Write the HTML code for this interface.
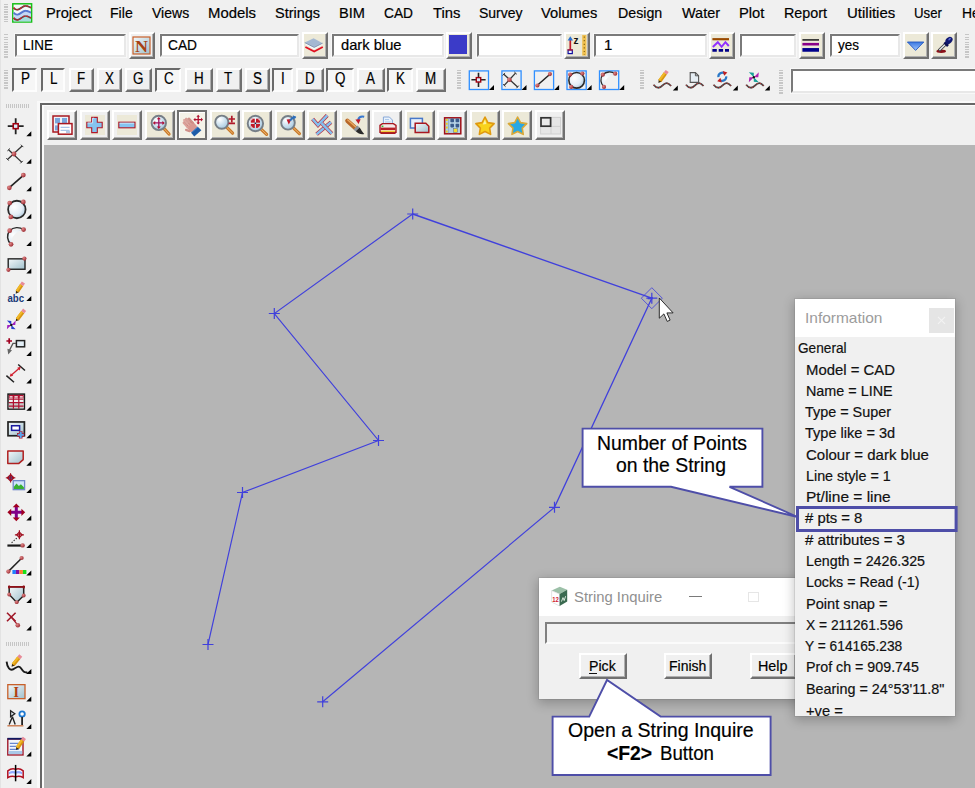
<!DOCTYPE html>
<html><head><meta charset="utf-8"><title>12d Model - String Inquire</title>
<style>
html,body{margin:0;padding:0;}
body{width:975px;height:788px;overflow:hidden;background:#f0f0f0;position:relative;font-family:"Liberation Sans",sans-serif;}
.t{-webkit-text-stroke:0.2px currentColor;position:absolute;white-space:pre;line-height:1;transform-origin:0 0;display:block;}
.fld{position:absolute;background:#fff;box-sizing:border-box;border:2px solid;border-color:#7a7a7a #e8e8e8 #e8e8e8 #7a7a7a;box-shadow:0 0 0 1px #f8f8f8;}
.btn{position:absolute;box-sizing:border-box;background:#ece9d8;border:2px solid;border-color:#fff #707070 #707070 #fff;}
.btn::after{content:"";position:absolute;left:0;top:0;right:0;bottom:0;border-right:1px solid #b0b0b0;border-bottom:1px solid #b0b0b0;}
.btn.g{background:#f0f0f0;}
.btn.p{border-color:#6a6a6a #fdfdfd #fdfdfd #6a6a6a;background:#f6f6f6;}
.btn.p::after,.btn.h::after{border:0;}
.btn.h{border-color:#707070;background:#f4f2e8;box-shadow:inset 1px 1px 0 #fff;}
svg{position:absolute;overflow:visible;}
</style></head><body>
<div style="position:absolute;left:0px;top:0px;width:1px;height:788px;background:#e3e3e3;"></div>
<div style="position:absolute;left:3.5px;top:4.2px;width:4.2px;height:17.5px;background:repeating-linear-gradient(to bottom,#c6c6c6 0 1.2px,transparent 1.2px 2.5px);"></div>
<span class="t" style="left:45.50px;top:5.00px;font-size:15px;color:#000;transform:scaleX(0.9753);">Project</span>
<span class="t" style="left:110.00px;top:5.00px;font-size:15px;color:#000;transform:scaleX(0.9400);">File</span>
<span class="t" style="left:151.80px;top:5.00px;font-size:15px;color:#000;transform:scaleX(0.9358);">Views</span>
<span class="t" style="left:208.00px;top:5.00px;font-size:15px;color:#000;transform:scaleX(0.9922);">Models</span>
<span class="t" style="left:275.00px;top:5.00px;font-size:15px;color:#000;transform:scaleX(0.9646);">Strings</span>
<span class="t" style="left:339.00px;top:5.00px;font-size:15px;color:#000;transform:scaleX(0.9738);">BIM</span>
<span class="t" style="left:384.00px;top:5.00px;font-size:15px;color:#000;transform:scaleX(0.9163);">CAD</span>
<span class="t" style="left:432.60px;top:5.00px;font-size:15px;color:#000;transform:scaleX(0.9874);">Tins</span>
<span class="t" style="left:478.50px;top:5.00px;font-size:15px;color:#000;transform:scaleX(0.9325);">Survey</span>
<span class="t" style="left:541.30px;top:5.00px;font-size:15px;color:#000;transform:scaleX(0.9787);">Volumes</span>
<span class="t" style="left:617.70px;top:5.00px;font-size:15px;color:#000;transform:scaleX(0.9481);">Design</span>
<span class="t" style="left:682.00px;top:5.00px;font-size:15px;color:#000;transform:scaleX(0.9632);">Water</span>
<span class="t" style="left:739.00px;top:5.00px;font-size:15px;color:#000;transform:scaleX(0.9816);">Plot</span>
<span class="t" style="left:784.00px;top:5.00px;font-size:15px;color:#000;transform:scaleX(0.9556);">Report</span>
<span class="t" style="left:846.70px;top:5.00px;font-size:15px;color:#000;transform:scaleX(0.9984);">Utilities</span>
<span class="t" style="left:914.30px;top:5.00px;font-size:15px;color:#000;transform:scaleX(0.8815);">User</span>
<span class="t" style="left:961.50px;top:5.00px;font-size:15px;color:#000;transform:scaleX(0.9246);">Help</span>
<div style="position:absolute;left:3.5px;top:34px;width:4.2px;height:25.0px;background:repeating-linear-gradient(to bottom,#c6c6c6 0 1.2px,transparent 1.2px 2.5px);"></div>
<div class="fld" style="left:15px;top:33.5px;width:111px;height:23.0px"></div>
<span class="t" style="left:22.80px;top:37.40px;font-size:15px;color:#000;transform:scaleX(0.8959);">LINE</span>
<div class="btn g" style="left:129px;top:32px;width:26px;height:27px"></div>
<div class="fld" style="left:160px;top:33.5px;width:139px;height:23.0px"></div>
<span class="t" style="left:167.80px;top:37.40px;font-size:15px;color:#000;transform:scaleX(0.9163);">CAD</span>
<div class="btn " style="left:302px;top:32px;width:26px;height:27px"></div>
<div class="fld" style="left:332px;top:33.5px;width:112px;height:23.0px"></div>
<span class="t" style="left:340.50px;top:37.40px;font-size:15px;color:#000;transform:scaleX(0.9802);">dark blue</span>
<div class="btn " style="left:446px;top:32px;width:26px;height:27px"><div style="position:absolute;left:0.8px;top:1.3px;width:18.6px;height:18.8px;background:#3b3bc8"></div></div>
<div class="fld" style="left:477px;top:33.5px;width:85px;height:23.0px"></div>
<div class="btn " style="left:564px;top:32px;width:26px;height:27px"></div>
<div class="fld" style="left:594px;top:33.5px;width:113px;height:23.0px"></div>
<span class="t" style="left:603.90px;top:37.40px;font-size:15px;color:#000;transform:scaleX(1.0000);">1</span>
<div class="btn " style="left:709px;top:32px;width:26px;height:27px"></div>
<div class="fld" style="left:740px;top:33.5px;width:56px;height:23.0px"></div>
<div class="btn " style="left:799px;top:32px;width:26px;height:27px"></div>
<div class="fld" style="left:830px;top:33.5px;width:70px;height:23.0px"></div>
<span class="t" style="left:838.00px;top:37.40px;font-size:15px;color:#000;transform:scaleX(0.9003);">yes</span>
<div class="btn " style="left:903px;top:32px;width:26px;height:27px"></div>
<div class="btn " style="left:931px;top:32px;width:26px;height:27px"></div>
<div style="position:absolute;left:965px;top:34px;width:4.2px;height:25.0px;background:repeating-linear-gradient(to bottom,#c6c6c6 0 1.2px,transparent 1.2px 2.5px);"></div>
<div style="position:absolute;left:3.5px;top:70px;width:4.2px;height:20.0px;background:repeating-linear-gradient(to bottom,#c6c6c6 0 1.2px,transparent 1.2px 2.5px);"></div>
<div class="btn g p" style="left:12px;top:68px;width:25px;height:23.5px"></div>
<span class="t" style="left:20.54px;top:71.09px;font-size:15.6px;color:#000;transform:scaleX(0.8600);">P</span>
<div class="btn g p" style="left:41px;top:68px;width:24px;height:23.5px"></div>
<span class="t" style="left:49.78px;top:71.09px;font-size:15.6px;color:#000;transform:scaleX(0.8600);">L</span>
<div class="btn g" style="left:69px;top:68px;width:25px;height:23.5px"></div>
<span class="t" style="left:76.91px;top:71.09px;font-size:15.6px;color:#000;transform:scaleX(0.8600);">F</span>
<div class="btn g" style="left:97px;top:68px;width:25px;height:23.5px"></div>
<span class="t" style="left:104.54px;top:71.09px;font-size:15.6px;color:#000;transform:scaleX(0.8600);">X</span>
<div class="btn g" style="left:125px;top:68px;width:27px;height:23.5px"></div>
<span class="t" style="left:132.77px;top:71.09px;font-size:15.6px;color:#000;transform:scaleX(0.8600);">G</span>
<div class="btn g p" style="left:155px;top:68px;width:26px;height:23.5px"></div>
<span class="t" style="left:163.67px;top:71.09px;font-size:15.6px;color:#000;transform:scaleX(0.8600);">C</span>
<div class="btn g" style="left:185px;top:68px;width:28px;height:23.5px"></div>
<span class="t" style="left:193.67px;top:71.09px;font-size:15.6px;color:#000;transform:scaleX(0.8600);">H</span>
<div class="btn g" style="left:216px;top:68px;width:26px;height:23.5px"></div>
<span class="t" style="left:224.41px;top:71.09px;font-size:15.6px;color:#000;transform:scaleX(0.8600);">T</span>
<div class="btn g" style="left:245px;top:68px;width:25px;height:23.5px"></div>
<span class="t" style="left:252.54px;top:71.09px;font-size:15.6px;color:#000;transform:scaleX(0.8600);">S</span>
<div class="btn g p" style="left:272px;top:68px;width:21px;height:23.5px"></div>
<span class="t" style="left:281.12px;top:71.09px;font-size:15.6px;color:#000;transform:scaleX(0.8600);">I</span>
<div class="btn g" style="left:296px;top:68px;width:28px;height:23.5px"></div>
<span class="t" style="left:304.67px;top:71.09px;font-size:15.6px;color:#000;transform:scaleX(0.8600);">D</span>
<div class="btn g p" style="left:326px;top:68px;width:28px;height:23.5px"></div>
<span class="t" style="left:335.27px;top:71.09px;font-size:15.6px;color:#000;transform:scaleX(0.8600);">Q</span>
<div class="btn g" style="left:357px;top:68px;width:28px;height:23.5px"></div>
<span class="t" style="left:366.01px;top:71.09px;font-size:15.6px;color:#000;transform:scaleX(0.8600);">A</span>
<div class="btn g p" style="left:387px;top:68px;width:26px;height:23.5px"></div>
<span class="t" style="left:396.04px;top:71.09px;font-size:15.6px;color:#000;transform:scaleX(0.8600);">K</span>
<div class="btn g" style="left:416px;top:68px;width:30px;height:23.5px"></div>
<span class="t" style="left:424.90px;top:71.09px;font-size:15.6px;color:#000;transform:scaleX(0.8600);">M</span>
<div style="position:absolute;left:456.5px;top:70px;width:4.2px;height:20.0px;background:repeating-linear-gradient(to bottom,#c6c6c6 0 1.2px,transparent 1.2px 2.5px);"></div>
<div style="position:absolute;left:640px;top:70px;width:4.2px;height:20.0px;background:repeating-linear-gradient(to bottom,#c6c6c6 0 1.2px,transparent 1.2px 2.5px);"></div>
<div style="position:absolute;left:778.5px;top:70px;width:4.2px;height:25.0px;background:repeating-linear-gradient(to bottom,#c6c6c6 0 1.2px,transparent 1.2px 2.5px);"></div>
<div class="fld" style="left:791px;top:69px;width:189px;height:24px"></div>
<div style="position:absolute;left:6px;top:104px;width:24px;height:4.2px;background:repeating-linear-gradient(to right,#c6c6c6 0 1px,transparent 1px 2px);"></div>
<div style="position:absolute;left:6px;top:641.6px;width:24px;height:4.2px;background:repeating-linear-gradient(to right,#c6c6c6 0 1px,transparent 1px 2px);"></div>
<div style="position:absolute;left:37px;top:101px;width:940px;height:700px;background:#f0f0f0;border-left:3px solid #f9f9f9;border-top:2px solid #fafafa;"></div>
<div style="position:absolute;left:40px;top:103px;width:940px;height:700px;background:#f0f0f0;border-left:2px solid #676767;border-top:2px solid #676767;"></div>
<div style="position:absolute;left:42px;top:105px;width:940px;height:1px;background:#fdfdfd;"></div>
<div style="position:absolute;left:42px;top:106px;width:2.3px;height:690px;background:#fbfbfb;"></div>
<div style="position:absolute;left:44.3px;top:145px;width:940px;height:650px;background:#b5b5b5;"></div>
<div class="btn g" style="left:47px;top:110px;width:30px;height:30px"></div>
<div class="btn g" style="left:80px;top:110px;width:30px;height:30px"><div style="position:absolute;left:2.6px;top:3.2px;width:20.4px;height:19.6px;background:#ece9d8"></div></div>
<div class="btn g" style="left:112px;top:110px;width:30px;height:30px"><div style="position:absolute;left:2.6px;top:3.2px;width:20.4px;height:19.6px;background:#ece9d8"></div></div>
<div class="btn " style="left:145px;top:110px;width:30px;height:30px"></div>
<div class="btn h" style="left:177px;top:110px;width:30px;height:30px"></div>
<div class="btn " style="left:210px;top:110px;width:30px;height:30px"></div>
<div class="btn " style="left:242px;top:110px;width:30px;height:30px"></div>
<div class="btn " style="left:275px;top:110px;width:30px;height:30px"></div>
<div class="btn " style="left:307px;top:110px;width:30px;height:30px"></div>
<div class="btn " style="left:340px;top:110px;width:30px;height:30px"></div>
<div class="btn g" style="left:372px;top:110px;width:30px;height:30px"></div>
<div class="btn " style="left:405px;top:110px;width:30px;height:30px"></div>
<div class="btn g" style="left:437px;top:110px;width:30px;height:30px"></div>
<div class="btn " style="left:470px;top:110px;width:30px;height:30px"></div>
<div class="btn " style="left:502px;top:110px;width:30px;height:30px"></div>
<div class="btn g" style="left:535px;top:110px;width:30px;height:30px"></div>
<svg width="975" height="788" style="left:0;top:0"><defs>
<radialGradient id="gball" cx="35%" cy="35%" r="75%"><stop offset="0" stop-color="#fff"/><stop offset="0.6" stop-color="#e4eef6"/><stop offset="1" stop-color="#a9c4d8"/></radialGradient>
<linearGradient id="gpane" x1="0" y1="0" x2="1" y2="1"><stop offset="0" stop-color="#f4f8fa"/><stop offset="1" stop-color="#9fc0cc"/></linearGradient>
<linearGradient id="gtri" x1="0" y1="0" x2="0" y2="1"><stop offset="0" stop-color="#3b78e0"/><stop offset="1" stop-color="#9cc4ff"/></linearGradient>
<radialGradient id="gdot" cx="35%" cy="35%" r="70%"><stop offset="0" stop-color="#e08888"/><stop offset="1" stop-color="#9a2830"/></radialGradient>
<radialGradient id="glens" cx="35%" cy="30%" r="80%"><stop offset="0" stop-color="#ffffff"/><stop offset="1" stop-color="#9cc4de"/></radialGradient>
</defs><rect x="469.3" y="70.9" width="19.2" height="18.6" fill="none" stroke="#2f8fff" stroke-width="1.3"/><path d="M471.4 79.8H485.6M478.5 72.7V86.9" stroke="#222" stroke-width="1.6"/><rect x="476.3" y="77.6" width="4.4" height="4.4" fill="#d8ecfa" stroke="#a00010" stroke-width="1.4"/><path d="M494.0 85.1L494.0 90.1L489.0 90.1Z" fill="#000"/><rect x="501.9" y="70.9" width="19.2" height="18.6" fill="none" stroke="#2f8fff" stroke-width="1.3"/><path d="M503.8 74.2L517.6 86.9" stroke="#333" stroke-width="1.3"/><path d="M504.9 72.9L502.6 75.5" stroke="#333" stroke-width="1"/><path d="M518.8 85.6L516.5 88.2" stroke="#333" stroke-width="1"/><path d="M515.5 73.1L504.2 85.4" stroke="#333" stroke-width="1.3"/><path d="M516.8 74.3L514.3 71.9" stroke="#333" stroke-width="1"/><path d="M505.5 86.6L503.0 84.2" stroke="#333" stroke-width="1"/><circle cx="509.4" cy="79.8" r="2.3" fill="url(#gdot)"/><path d="M526.5 85.1L526.5 90.1L521.5 90.1Z" fill="#000"/><rect x="534.4" y="70.9" width="19.2" height="18.6" fill="none" stroke="#2f8fff" stroke-width="1.3"/><path d="M537.3999999999999 85.3L549.8999999999999 74.3" stroke="#222" stroke-width="1.5"/><circle cx="537.4" cy="85.5" r="2.1" fill="url(#gdot)"/><circle cx="549.9" cy="74.1" r="2.1" fill="url(#gdot)"/><path d="M559.1 85.1L559.1 90.1L554.1 90.1Z" fill="#000"/><rect x="567.0" y="70.9" width="19.2" height="18.6" fill="none" stroke="#2f8fff" stroke-width="1.3"/><circle cx="576.65" cy="80.3" r="7.8" fill="url(#gball)" stroke="#2a2a2a" stroke-width="1.6"/><circle cx="570.2" cy="74.5" r="2.1" fill="url(#gdot)"/><circle cx="582.4" cy="73.5" r="2.1" fill="url(#gdot)"/><circle cx="571.2" cy="86.9" r="2.1" fill="url(#gdot)"/><path d="M591.6 85.1L591.6 90.1L586.6 90.1Z" fill="#000"/><rect x="599.5" y="70.9" width="19.2" height="18.6" fill="none" stroke="#2f8fff" stroke-width="1.3"/><path d="M603.9999999999999 86.69999999999999A9 9 0 0 1 602.8 74.7L615.1999999999999 73.89999999999999A13 13 0 0 0 603.9999999999999 86.69999999999999Z" fill="url(#gball)"/><path d="M603.9999999999999 86.69999999999999A8.6 8.6 0 0 1 602.8 74.7A9.5 9.5 0 0 1 615.1999999999999 73.89999999999999" fill="none" stroke="#2a2a2a" stroke-width="1.3"/><circle cx="602.8" cy="74.7" r="2.1" fill="url(#gdot)"/><circle cx="615.2" cy="73.7" r="2.1" fill="url(#gdot)"/><circle cx="604.0" cy="86.9" r="2.1" fill="url(#gdot)"/><path d="M624.2 85.1L624.2 90.1L619.2 90.1Z" fill="#000"/><path d="M653.6 84.80000000000001C656.6 88.60000000000001,659.6 88.60000000000001,662.6 85.4S668.1 82.4,671.1 86.0" fill="none" stroke="#444" stroke-width="1.8"/><path d="M653.6 84.80000000000001C656.6 88.60000000000001,659.6 88.60000000000001,662.6 85.4S668.1 82.4,671.1 86.0" fill="none" stroke="#d83030" stroke-width="0.8" stroke-dasharray="1.4 1.8"/><path d="M658.40 83.00L661.82 81.54L658.76 79.30Z" fill="#3a2a10"/><path d="M661.47 82.03L666.96 74.54L663.89 72.30L658.41 79.78Z" fill="#d89410"/><path d="M660.10 81.02L665.59 73.54L663.89 72.30L658.41 79.78Z" fill="#f0b828"/><path d="M666.96 74.54L668.73 72.12L665.67 69.88L663.89 72.30Z" fill="#e88a98"/><path d="M677.8 85.4L677.8 90.4L672.8 90.4Z" fill="#000"/><path d="M686 84.80000000000001C689 88.60000000000001,692 88.60000000000001,695 85.4S700.5 82.4,703.5 86.0" fill="none" stroke="#444" stroke-width="1.8"/><path d="M686 84.80000000000001C689 88.60000000000001,692 88.60000000000001,695 85.4S700.5 82.4,703.5 86.0" fill="none" stroke="#d83030" stroke-width="0.8" stroke-dasharray="1.4 1.8"/><path d="M690.2 72.6h5.2l3.2 3.2v6.6h-8.4z" fill="#e6eef4" stroke="#555" stroke-width="1.1"/><path d="M695.4 72.6v3.2h3.2" fill="none" stroke="#555" stroke-width="1"/><path d="M713.6 84.80000000000001C716.6 88.60000000000001,719.6 88.60000000000001,722.6 85.4S728.1 82.4,731.1 86.0" fill="none" stroke="#444" stroke-width="1.8"/><path d="M713.6 84.80000000000001C716.6 88.60000000000001,719.6 88.60000000000001,722.6 85.4S728.1 82.4,731.1 86.0" fill="none" stroke="#d83030" stroke-width="0.8" stroke-dasharray="1.4 1.8"/><path d="M737.8 85.4L737.8 90.4L732.8 90.4Z" fill="#000"/><path d="M718.4 77.2A4 4 0 0 1 724.6 73.4" fill="none" stroke="#2a78c8" stroke-width="2.2"/><path d="M722.8 71l4.6 1.4l-3.2 3.4z" fill="#c02020"/><path d="M726.2 76.4A4 4 0 0 1 720 80.2" fill="none" stroke="#2a78c8" stroke-width="2.2"/><path d="M721.8 82.6l-4.6 -1.4l3.2 -3.4z" fill="#c02020"/><path d="M746.2 84.80000000000001C749.2 88.60000000000001,752.2 88.60000000000001,755.2 85.4S760.7 82.4,763.7 86.0" fill="none" stroke="#444" stroke-width="1.8"/><path d="M746.2 84.80000000000001C749.2 88.60000000000001,752.2 88.60000000000001,755.2 85.4S760.7 82.4,763.7 86.0" fill="none" stroke="#d83030" stroke-width="0.8" stroke-dasharray="1.4 1.8"/><path d="M769.8 85.4L769.8 90.4L764.8 90.4Z" fill="#000"/><path d="M753.8 77.2L748.8 72.2L753.8 72.7ZM753.8 77.2L758.8 82.2L753.8 81.7Z" fill="#18a098"/><path d="M753.8 77.2L758.8 72.2L758.3 77.2ZM753.8 77.2L748.8 82.2L749.3 77.2Z" fill="#b020b0"/><circle cx="753.8" cy="77.2" r="1.2" fill="#111"/><rect x="12.8" y="3.8" width="18.8" height="18.2" fill="#f4f8f8" stroke="#18c018" stroke-width="1.5"/><path d="M13.6 17.9C15.2 19.9,16.4 20.099999999999998,17.6 19.9C20.6 19.5,22.6 15.899999999999999,25.6 15.999999999999998C27.4 15.999999999999998,29.4 17.299999999999997,31 17.9V21.4H13.6Z" fill="#a4dcdc"/><path d="M13.6 12.6C15.2 14.6,16.4 14.8,17.6 14.6C20.6 14.2,22.6 10.6,25.6 10.7C27.4 10.7,29.4 12.0,31 12.6V17.9C29.4 17.3,27.4 16,25.6 16C22.6 15.9,20.6 19.5,17.6 19.9C16.4 20.1,15.2 19.9,13.6 17.9Z" fill="#c4d8f4"/><path d="M13.6 12.6C15.2 14.6,16.4 14.8,17.6 14.6C20.6 14.2,22.6 10.6,25.6 10.7C27.4 10.7,29.4 12.0,31 12.6" fill="none" stroke="#5878d0" stroke-width="1.9"/><path d="M13.6 7.7C15.2 9.7,16.4 9.9,17.6 9.7C20.6 9.3,22.6 5.7,25.6 5.800000000000001C27.4 5.800000000000001,29.4 7.1000000000000005,31 7.7" fill="none" stroke="#5a4848" stroke-width="1.7"/><path d="M13.6 7.7C15.2 9.7,16.4 9.9,17.6 9.7C20.6 9.3,22.6 5.7,25.6 5.800000000000001C27.4 5.800000000000001,29.4 7.1000000000000005,31 7.7" fill="none" stroke="#d02028" stroke-width="1.2" stroke-dasharray="2 1.6"/><path d="M13.6 17.9C15.2 19.9,16.4 20.099999999999998,17.6 19.9C20.6 19.5,22.6 15.899999999999999,25.6 15.999999999999998C27.4 15.999999999999998,29.4 17.299999999999997,31 17.9" fill="none" stroke="#5a4848" stroke-width="1.7"/><path d="M13.6 17.9C15.2 19.9,16.4 20.099999999999998,17.6 19.9C20.6 19.5,22.6 15.899999999999999,25.6 15.999999999999998C27.4 15.999999999999998,29.4 17.299999999999997,31 17.9" fill="none" stroke="#d02028" stroke-width="1.2" stroke-dasharray="2 1.6"/><rect x="133" y="37" width="17" height="17" fill="url(#gpane)" stroke="#c8602a" stroke-width="1.2"/><text x="141.5" y="52" font-family="Liberation Serif" font-weight="bold" font-size="17" fill="#a84010" text-anchor="middle" textLength="13" lengthAdjust="spacingAndGlyphs">N</text><path d="M305.4 47L314.2 51.6L322.8 47" fill="none" stroke="#e01020" stroke-width="1.8"/><path d="M305.2 44.6L314.2 49.4L322.8 44.6L314.2 41z" fill="#f4f8fb"/><path d="M304.8 42.6L313.6 38.2L322.6 43.2L314.2 47.4z" fill="#a4b8d2"/><path d="M304.8 42.6L314.2 47.4L322.6 43.2" fill="none" stroke="#7f93ad" stroke-width="0.9"/><path d="M570.3 39.5V50" stroke="#c01828" stroke-width="1.7"/><path d="M570.3 36.2L573 40.6H567.6z" fill="#2a70d0"/><rect x="568.1" y="50" width="4.2" height="3.6" fill="#e8f0ff" stroke="#1010a0" stroke-width="1.2"/><path d="M567.5 49.9h5.4" stroke="#c01828" stroke-width="1.2"/><text x="573.4" y="44.2" font-family="Liberation Sans" font-weight="bold" font-size="10" fill="#111">z</text><rect x="582.2" y="35" width="4.2" height="20.6" fill="#f0c050"/><path d="M584.3 36.5V55" stroke="#8a6a10" stroke-width="1.2" stroke-dasharray="1.2 2.4"/><path d="M712.4 39.2H729" stroke="#9a4a00" stroke-width="2.2"/><path d="M712.8 47L717.8 42.2L721.6 46.8L725.4 42.2L728.8 46" fill="none" stroke="#9030ff" stroke-width="1.9"/><path d="M712.4 50.4H729" stroke="#000088" stroke-width="2.6" stroke-dasharray="4.4 1.9"/><path d="M802.4 39.9H819" stroke="#333" stroke-width="1.7"/><path d="M802.4 44.2H819" stroke="#880088" stroke-width="2.6"/><path d="M802.4 49.9H819" stroke="#00008b" stroke-width="3.7"/><path d="M907.4 42L923.8 42L915.6 50.4z" fill="url(#gtri)" stroke="#2458c0" stroke-width="0.9"/><ellipse cx="941.2" cy="51.3" rx="4.8" ry="1.7" fill="#8a1018"/><path d="M946.4 43.4L938.8 50.6" stroke="#444" stroke-width="3"/><path d="M946 43.8L939.4 50" stroke="#e8eef4" stroke-width="1.3"/><path d="M944.4 42.4l3.6 3.6" stroke="#0c1050" stroke-width="2.6"/><ellipse cx="949" cy="40.4" rx="3" ry="4" transform="rotate(45 949 40.4)" fill="#101870"/><ellipse cx="949.6" cy="39.2" rx="0.9" ry="1.6" transform="rotate(45 949.6 39.2)" fill="#5868d0"/><path d="M31.3 131.3L31.3 136.3L26.3 136.3Z" fill="#000"/><path d="M31.3 158.8L31.3 163.8L26.3 163.8Z" fill="#000"/><path d="M31.3 186.2L31.3 191.2L26.3 191.2Z" fill="#000"/><path d="M31.3 213.7L31.3 218.7L26.3 218.7Z" fill="#000"/><path d="M31.3 241.1L31.3 246.1L26.3 246.1Z" fill="#000"/><path d="M31.3 268.6L31.3 273.6L26.3 273.6Z" fill="#000"/><path d="M31.3 296.0L31.3 301.0L26.3 301.0Z" fill="#000"/><path d="M31.3 323.5L31.3 328.5L26.3 328.5Z" fill="#000"/><path d="M31.3 350.9L31.3 355.9L26.3 355.9Z" fill="#000"/><path d="M31.3 378.4L31.3 383.4L26.3 383.4Z" fill="#000"/><path d="M31.3 405.8L31.3 410.8L26.3 410.8Z" fill="#000"/><path d="M31.3 433.2L31.3 438.2L26.3 438.2Z" fill="#000"/><path d="M31.3 460.7L31.3 465.7L26.3 465.7Z" fill="#000"/><path d="M31.3 488.1L31.3 493.1L26.3 493.1Z" fill="#000"/><path d="M31.3 515.6L31.3 520.6L26.3 520.6Z" fill="#000"/><path d="M31.3 543.1L31.3 548.1L26.3 548.1Z" fill="#000"/><path d="M31.3 570.5L31.3 575.5L26.3 575.5Z" fill="#000"/><path d="M31.3 598.0L31.3 603.0L26.3 603.0Z" fill="#000"/><path d="M31.3 625.4L31.3 630.4L26.3 630.4Z" fill="#000"/><g transform="translate(5.05 115.55) scale(1.12)"><path d="M2.4 9.5H16.6M9.5 2.4V16.6" stroke="#222" stroke-width="1.6"/><rect x="7.3" y="7.3" width="4.4" height="4.4" fill="#d8ecfa" stroke="#a00010" stroke-width="1.4"/></g><path d="M8.6 149.7L21.6 162.1" stroke="#333" stroke-width="1.3"/><path d="M9.8 148.5L7.4 150.9" stroke="#333" stroke-width="1"/><path d="M22.8 160.9L20.4 163.3" stroke="#333" stroke-width="1"/><path d="M22.1 145.9L7.5 159.4" stroke="#333" stroke-width="1.3"/><path d="M23.3 147.1L20.9 144.7" stroke="#333" stroke-width="1"/><path d="M8.7 160.6L6.3 158.2" stroke="#333" stroke-width="1"/><circle cx="14.0" cy="154.0" r="2.4" fill="url(#gdot)"/><g transform="translate(5.65 170.85) scale(1.12)"><path d="M3.3 15L15.8 4" stroke="#222" stroke-width="1.5"/><circle cx="3.3" cy="15.2" r="2.1" fill="url(#gdot)"/><circle cx="15.8" cy="3.8" r="2.1" fill="url(#gdot)"/></g><g transform="translate(5.65 198.30) scale(1.12)"><circle cx="10" cy="10" r="7.8" fill="url(#gball)" stroke="#2a2a2a" stroke-width="1.6"/><circle cx="3.6" cy="4.2" r="2.1" fill="url(#gdot)"/><circle cx="15.8" cy="3.2" r="2.1" fill="url(#gdot)"/><circle cx="4.6" cy="16.6" r="2.1" fill="url(#gdot)"/></g><g transform="translate(5.65 225.75) scale(1.12)"><path d="M4.8 16.4A9 9 0 0 1 3.6 4.4L16 3.6A13 13 0 0 0 4.8 16.4Z" fill="url(#gball)"/><path d="M4.8 16.4A8.6 8.6 0 0 1 3.6 4.4A9.5 9.5 0 0 1 16 3.6" fill="none" stroke="#2a2a2a" stroke-width="1.3"/><circle cx="3.6" cy="4.4" r="2.1" fill="url(#gdot)"/><circle cx="16.0" cy="3.4" r="2.1" fill="url(#gdot)"/><circle cx="4.8" cy="16.6" r="2.1" fill="url(#gdot)"/></g><rect x="8.2" y="258.84999999999997" width="16.8" height="10.4" fill="url(#gpane)" stroke="#222" stroke-width="1.4"/><circle cx="24.4" cy="258.6" r="2.1" fill="url(#gdot)"/><circle cx="8.4" cy="269.8" r="2.1" fill="url(#gdot)"/><path d="M15.80 293.70L19.17 292.12L16.02 289.99Z" fill="#3a2a10"/><path d="M18.83 292.62L23.29 286.05L20.14 283.92L15.69 290.48Z" fill="#d89410"/><path d="M17.43 291.66L21.88 285.09L20.14 283.92L15.69 290.48Z" fill="#f0b828"/><path d="M23.29 286.05L24.97 283.57L21.83 281.43L20.14 283.92Z" fill="#e88a98"/><text x="7.4" y="301.9" font-family="Liberation Sans" font-weight="bold" font-size="10" fill="#1a3a78" textLength="16.6" lengthAdjust="spacingAndGlyphs">abc</text><path d="M15.80 321.35L19.25 319.95L16.22 317.65Z" fill="#3a2a10"/><path d="M18.89 320.43L24.30 313.29L21.27 310.99L15.86 318.13Z" fill="#d89410"/><path d="M17.53 319.40L22.95 312.26L21.27 310.99L15.86 318.13Z" fill="#f0b828"/><path d="M24.30 313.29L26.11 310.90L23.09 308.60L21.27 310.99Z" fill="#e88a98"/><path d="M11.3 324.95000000000005L6.9 320.55000000000007L11.3 320.99000000000007ZM11.3 324.95000000000005L15.700000000000001 329.35L11.3 328.91Z" fill="#2840d0"/><path d="M11.3 324.95000000000005L15.700000000000001 320.55000000000007L15.260000000000002 324.95000000000005ZM11.3 324.95000000000005L6.9 329.35L7.34 324.95000000000005Z" fill="#a020c0"/><circle cx="11.3" cy="324.95000000000005" r="1.2" fill="#111"/><path d="M6.4 341.0h5.6M9.2 338.2v5.6" stroke="#a00020" stroke-width="1.7"/><rect x="16.4" y="340.6" width="8.2" height="6.2" fill="#e2eef6" stroke="#222" stroke-width="1.5"/><path d="M16 343.40000000000003h-3l-3.4 6.6" fill="none" stroke="#555" stroke-width="1.3"/><path d="M7.4 348.8l0.8 5.6l3.8 -4.2z" fill="#666"/><path d="M6.4 375.65L14 382.25M18.2 364.45L25 370.45" stroke="#222" stroke-width="1.5"/><path d="M10.6 375.85L19.8 367.85" stroke="#d02030" stroke-width="1.3"/><path d="M9.6 376.85l1.2 -3.6l2.4 2.6zM20.8 366.85l-1.2 3.6l-2.4 -2.6z" fill="#d02030"/><rect x="8" y="394.09999999999997" width="16.4" height="15" fill="#f2f2f2" stroke="#1a1a1a" stroke-width="1.5"/><rect x="8.8" y="394.9" width="14.8" height="3" fill="#b01030"/><rect x="8.8" y="403.09999999999997" width="14.8" height="5.2" fill="#c8c8c8"/><path d="M8.8 399.09999999999997h14.8M8.8 402.7h14.8M8.8 406.09999999999997h14.8M13.4 394.7v14M18.8 394.7v14" stroke="#b01030" stroke-width="1.2"/><path d="M9.6 396.9h3M14.4 396.9h3.4M19.8 396.9h3" stroke="#fff" stroke-width="1.1"/><rect x="8" y="421.95" width="16.4" height="13.8" fill="url(#gpane)" stroke="#222" stroke-width="1.7"/><rect x="11.6" y="425.75" width="8" height="4.6" fill="#fff" stroke="#1a1aa0" stroke-width="1.5"/><path d="M17 434.75h7.4M20.7 431.15v7.4" stroke="#b01020" stroke-width="3.6"/><path d="M17.6 434.75h6.2M20.7 431.75v6.2" stroke="#58a8f0" stroke-width="2"/><path d="M7.8 450.99999999999994H23.2V459.59999999999997L18.9 463.4H7.8Z" fill="url(#gpane)" stroke="#b02020" stroke-width="1.5" stroke-linejoin="round"/><rect x="13.2" y="480.65" width="11.4" height="9" fill="#cfe4fa" stroke="#7088c8" stroke-width="1.3"/><path d="M13.9 489.04999999999995v-2.4l2.6 -3.2l2.4 2.6l2 -1.8l3 3v1.8z" fill="#38b030"/><path d="M10.6 473.65l4.2 4.2l-4.2 4.2l-4.2 -4.2z" fill="#a01020"/><rect x="9.2" y="476.44999999999993" width="2.8" height="2.8" fill="#2858c0"/><path d="M10.6 473.04999999999995v9.6M5.8 477.84999999999997h9.6" stroke="#a01020" stroke-width="0.9"/><path d="M10.3 512.3h12M16.3 506.29999999999995v12" stroke="#800088" stroke-width="3"/><path d="M7.4 512.3l3.8 -3.6v7.2zM25.200000000000003 512.3l-3.8 -3.6v7.2zM16.3 503.4l-3.6 3.8h7.2zM16.3 521.1999999999999l-3.6 -3.8h7.2z" fill="#a00020"/><path d="M7.4 545.5500000000001H21.6" stroke="#1a1a1a" stroke-width="2.2"/><circle cx="22.6" cy="545.4" r="2.2" fill="url(#gdot)"/><path d="M11.6 542.75L17.4 537.5500000000001" stroke="#333" stroke-width="1.1" stroke-dasharray="1.4 1.4"/><path d="M19.4 530.35v9M14.9 534.85h9" stroke="#a01020" stroke-width="1.2"/><path d="M19.4 532.1500000000001l2.7 2.7l-2.7 2.7l-2.7 -2.7z" fill="none" stroke="#a01020" stroke-width="1.2"/><path d="M8.4 571.4L21.6 558.1999999999999" stroke="#222" stroke-width="1.5"/><circle cx="8.4" cy="571.6" r="2.1" fill="url(#gdot)"/><circle cx="21.6" cy="558.0" r="2.1" fill="url(#gdot)"/><rect x="12.4" y="570.0" width="3.5" height="4" fill="#1e80ff"/><rect x="15.9" y="570.0" width="3.5" height="4" fill="#8010a0"/><rect x="19.4" y="570.0" width="3.5" height="4" fill="#ff8030"/><rect x="22.9" y="570.0" width="3.5" height="4" fill="#18e018"/><path d="M9.2 586.85H23.7V595.45L16.7 602.45L9.2 594.45Z" fill="url(#gpane)" stroke="#222" stroke-width="1.5"/><path d="M8 586.85H25M9.2 585.45v3M23.7 585.45v3" stroke="#901018" stroke-width="1.7"/><circle cx="9.2" cy="594.5" r="1.9" fill="url(#gdot)"/><circle cx="23.7" cy="595.5" r="1.9" fill="url(#gdot)"/><circle cx="16.7" cy="602.2" r="1.9" fill="url(#gdot)"/><path d="M7 612.6999999999999l8.6 8.6M15.6 612.6999999999999l-8.6 8.6" stroke="#a01828" stroke-width="1.6"/><path d="M11.3 617.0999999999999L17.8 625.0999999999999" stroke="#a01828" stroke-width="1.3"/><circle cx="17.8" cy="625.3" r="2.3" fill="url(#gdot)"/><path d="M31.3 696.4L31.3 701.4L26.3 701.4Z" fill="#000"/><path d="M31.3 723.9L31.3 728.9L26.3 728.9Z" fill="#000"/><path d="M31.3 751.5L31.3 756.5L26.3 756.5Z" fill="#000"/><path d="M31.3 779.0L31.3 784.0L26.3 784.0Z" fill="#000"/><path d="M6.6 661.7C7.2 667.7,10 671.1,13.6 669.1S18.8 665.1,21 668.3000000000001S24.4 673.1,27.4 672.1" fill="none" stroke="#1a1a1a" stroke-width="1.9"/><path d="M31.4 668.9000000000001v5h-5.4z" fill="#000"/><path d="M11.60 666.70L15.10 665.43L12.16 663.02Z" fill="#3a2a10"/><path d="M14.72 665.90L20.36 659.02L17.43 656.61L11.78 663.48Z" fill="#d89410"/><path d="M13.40 664.82L19.05 657.95L17.43 656.61L11.78 663.48Z" fill="#f0b828"/><path d="M20.36 659.02L22.27 656.71L19.33 654.29L17.43 656.61Z" fill="#e88a98"/><rect x="7.8" y="684.65" width="17.2" height="14" fill="url(#gpane)" stroke="#c8602a" stroke-width="1.3"/><text x="16.3" y="696.65" font-family="Liberation Serif" font-weight="bold" font-size="14" fill="#b04010" text-anchor="middle">I</text><path d="M10.6 710.8000000000001v6l4.2 -3z" fill="#dfe8ee" stroke="#222" stroke-width="1.3"/><path d="M12.4 716.8000000000001L9.2 724.4000000000001M12.4 716.8000000000001L15.2 724.4000000000001" stroke="#222" stroke-width="1.4"/><circle cx="22.1" cy="714.0000000000001" r="2.7" fill="#fff" stroke="#1e78d0" stroke-width="1.8"/><path d="M22.1 717.0000000000001v8" stroke="#222" stroke-width="1.8"/><path d="M7.4 725.8000000000001H23.4" stroke="#c87040" stroke-width="1.3"/><rect x="7.8" y="738.95" width="15.2" height="16" fill="#f2f6fa" stroke="#a01828" stroke-width="1.4"/><path d="M7.4 738.75H23.4" stroke="#101860" stroke-width="1.8"/><path d="M9.8 743.35h9M9.8 746.35h9M9.8 749.35h9" stroke="#6888d0" stroke-width="1.1"/><rect x="8.6" y="750.95" width="13.6" height="3.2" fill="#a8c8e8"/><path d="M16.00 749.95L19.39 748.42L16.28 746.24Z" fill="#3a2a10"/><path d="M19.05 748.91L24.24 741.50L21.12 739.32L15.93 746.73Z" fill="#d89410"/><path d="M17.65 747.93L22.84 740.52L21.12 739.32L15.93 746.73Z" fill="#f0b828"/><path d="M24.24 741.50L25.96 739.04L22.84 736.86L21.12 739.32Z" fill="#e88a98"/><path d="M7.8 770.9000000000001Q11.6 767.9000000000001,15.6 769.3000000000001Q19.6 767.9000000000001,23.2 770.9000000000001V777.7Q19.6 775.5000000000001,15.6 776.9000000000001Q11.6 775.5000000000001,7.8 777.7Z" fill="#f4f4ff" stroke="#b01020" stroke-width="1.5"/><path d="M9 772.3000000000001Q12 770.3000000000001,15.6 771.5000000000001Q19 770.3000000000001,22 772.3000000000001V774.3000000000001Q19 772.5000000000001,15.6 773.7Q12 772.5000000000001,9 774.3000000000001Z" fill="#90a8ff"/><path d="M15.6 764.9000000000001V781.3000000000001" stroke="#000" stroke-width="1.5"/><rect x="53" y="116" width="16" height="16" fill="#eef2f8" stroke="#a81820" stroke-width="1.5"/><rect x="55" y="118" width="5" height="5.4" fill="#7aa6dc"/><rect x="62" y="118" width="5" height="5.4" fill="#7aa6dc"/><rect x="55" y="125.4" width="5" height="5" fill="#7aa6dc"/><rect x="58.4" y="123.6" width="13.6" height="10.6" fill="#fff" stroke="#a81820" stroke-width="1.5"/><path d="M60.6 127.4h9M60.6 130.4h9" stroke="#a8c4e8" stroke-width="1.2"/><path d="M66 132h4" stroke="#6a90c8" stroke-width="1"/><path d="M86.8 122.2h4.9v-4.8h5.6v4.8h4.9v5.6h-4.9v4.8h-5.6v-4.8h-4.9z" fill="#86c4f0" stroke="#b01828" stroke-width="1.1"/><path d="M87.6 123h5v-4.8h1.6" fill="none" stroke="#c8e6fa" stroke-width="1"/><rect x="118.8" y="122.2" width="16.2" height="5.6" fill="#86c4f0" stroke="#b01828" stroke-width="1.1"/><path d="M119.6 123.2h14.6" stroke="#c8e6fa" stroke-width="1"/><path d="M164.1 128.6L169 134" stroke="#c87828" stroke-width="3.2" stroke-linecap="round"/><path d="M164.1 128.6L169 134" stroke="#f0b870" stroke-width="1" stroke-linecap="round"/><circle cx="158.8" cy="122.9" r="7.2" fill="url(#glens)" stroke="#767e86" stroke-width="1.9"/><path d="M154.2 122.9h9.2M158.8 118.3v9.2" stroke="#a01060" stroke-width="1.3"/><path d="M152.8 122.9l2.4 -2v4zM164.8 122.9l-2.4 -2v4zM158.8 116.9l-2 2.4h4zM158.8 128.9l-2 -2.4h4z" fill="#b01030"/><g transform="translate(194.2 129.4) rotate(-42)"><rect x="-4.3" y="-8.6" width="8.6" height="9.6" rx="2.4" fill="#d89890"/><rect x="-4.5" y="-13" width="2.1" height="8" rx="1" fill="#dca098"/><rect x="-2.25" y="-14.8" width="2.1" height="9" rx="1" fill="#e0a8a0"/><rect x="0.05" y="-14.4" width="2.1" height="9" rx="1" fill="#dca098"/><rect x="2.3" y="-12.6" width="2.1" height="8" rx="1" fill="#d09088"/><rect x="-6.6" y="-6.4" width="2.2" height="6" rx="1.1" transform="rotate(-28 -5.5 -3.4)" fill="#d09088"/><path d="M-2.35 -13.5v7M-0.05 -14v7.6M2.25 -13v6.6" stroke="#b87870" stroke-width="0.5"/><path d="M-4.4 0.4h8.8l0.4 5h-9.6z" fill="#1e5ca8"/><path d="M-4.4 0.6h8.8" stroke="#4a88d0" stroke-width="0.9"/></g><path d="M194.6 119.6h7.2M198.2 116v7.2" stroke="#b01030" stroke-width="1.3"/><path d="M193.4 119.6l2 -1.8v3.6zM203 119.6l-2 -1.8v3.6zM198.2 114.8l-1.8 2h3.6zM198.2 124.4l-1.8 -2h3.6z" fill="#b01030"/><path d="M226.8 127.3L232.6 133.2" stroke="#c87828" stroke-width="3.2" stroke-linecap="round"/><path d="M226.8 127.3L232.6 133.2" stroke="#f0b870" stroke-width="1" stroke-linecap="round"/><circle cx="221.8" cy="122.2" r="6.6" fill="url(#glens)" stroke="#767e86" stroke-width="1.9"/><path d="M228.6 119h6.4M231.8 115.8v6.4M228.6 123.3h6.4" stroke="#b01828" stroke-width="1.7"/><path d="M261.3 129.3L266.6 134.4" stroke="#c87828" stroke-width="3.2" stroke-linecap="round"/><path d="M261.3 129.3L266.6 134.4" stroke="#f0b870" stroke-width="1" stroke-linecap="round"/><circle cx="255.4" cy="123.5" r="7.7" fill="url(#glens)" stroke="#767e86" stroke-width="1.9"/><rect x="250.8" y="118.7" width="4" height="4" fill="#c01828"/><path d="M250.8 121.1L250.8 118.7L253.2 118.7Z" fill="#e8c0c4"/><rect x="256.0" y="118.7" width="4" height="4" fill="#c01828"/><path d="M260.0 121.1L260.0 118.7L257.6 118.7Z" fill="#e8c0c4"/><rect x="250.8" y="123.9" width="4" height="4" fill="#c01828"/><path d="M250.8 125.5L250.8 127.9L253.2 127.9Z" fill="#e8c0c4"/><rect x="256.0" y="123.9" width="4" height="4" fill="#c01828"/><path d="M260.0 125.5L260.0 127.9L257.6 127.9Z" fill="#e8c0c4"/><rect x="254.6" y="122.5" width="1.6" height="1.6" fill="#181840"/><path d="M293.4 127.9L299.4 133.6" stroke="#c87828" stroke-width="3.2" stroke-linecap="round"/><path d="M293.4 127.9L299.4 133.6" stroke="#f0b870" stroke-width="1" stroke-linecap="round"/><circle cx="288" cy="122.8" r="6.8" fill="url(#glens)" stroke="#767e86" stroke-width="1.9"/><path d="M286.6 119.6l5 -0.6l-2.8 5.4z" fill="#c01828"/><path d="M290.2 121C291 118.6,293 117.2,295.6 117.2" fill="none" stroke="#2f6fb8" stroke-width="1.9"/><path d="M292.8 115.2l3.6 1.8l-3 2.4z" fill="#2f6fb8"/><path d="M312.6 119L318 125.2L327.2 115.4" fill="none" stroke="#b83040" stroke-width="3.9" stroke-linecap="butt"/><path d="M312.6 119L318 125.2L327.2 115.4" fill="none" stroke="#84c0f0" stroke-width="2.5"/><path d="M316.6 134.2L331 122.2" fill="none" stroke="#b83040" stroke-width="3.9" stroke-linecap="butt"/><path d="M316.6 134.2L331 122.2" fill="none" stroke="#84c0f0" stroke-width="2.5"/><path d="M321.4 123L331.8 133.6" fill="none" stroke="#b83040" stroke-width="3.9" stroke-linecap="butt"/><path d="M321.4 123L331.8 133.6" fill="none" stroke="#84c0f0" stroke-width="2.5"/><path d="M347.4 120.8L355.4 128" stroke="#b86828" stroke-width="4.4" stroke-linecap="round"/><path d="M347.8 120L355.8 127" stroke="#e8a860" stroke-width="1.4" stroke-linecap="round"/><path d="M353.6 129.4l3.8 -3.8l2.2 2l-3.8 3.8z" fill="#8a929a"/><path d="M355.8 131.2l3.8 -3.6c1.6 2 2.4 4.4 4.6 6.4c-3.4 0.6 -6 -0.4 -8.4 -2.8z" fill="#2a2a2a"/><path d="M364.2 116.8C361.2 116,358.8 117.4,358 120" fill="none" stroke="#3878d0" stroke-width="2"/><path d="M355.4 119.6l5.2 -0.4l-2 4.8z" fill="#c01828"/><path d="M383.4 124.6v-7.6h6l3 3v4.6z" fill="#e8f2fc" stroke="#88a8d8" stroke-width="1"/><path d="M385 119.6h4M385 122h5.6" stroke="#a8c4e8" stroke-width="1"/><path d="M380 125.4l2.4 -1.8h11l2.6 1.8v6.8h-16z" fill="#f4e8e8" stroke="#a81820" stroke-width="1.4"/><rect x="380.6" y="127.6" width="14.8" height="2.4" fill="#b82028"/><rect x="381" y="130.6" width="14" height="1.6" fill="#f0c838"/><rect x="381.6" y="125.6" width="1.8" height="1.4" fill="#30c030"/><path d="M380.4 133.2h15.2" stroke="#a81820" stroke-width="1.6"/><rect x="410.4" y="118.4" width="12" height="9.6" fill="#e8f0fa" stroke="#4878c8" stroke-width="1.5"/><path d="M415.2 123.2h10.6l3 3v6.4h-13.6z" fill="url(#gpane)" stroke="#a81820" stroke-width="1.5"/><rect x="444.6" y="117.8" width="16.2" height="16" fill="#b4d0e4" stroke="#a01018" stroke-width="1.5"/><rect x="450.4" y="118.6" width="3.6" height="3.6" rx="0.8" fill="#3a5a8a"/><rect x="455.59999999999997" y="118.6" width="3.6" height="3.6" rx="0.8" fill="#3a5a8a"/><rect x="450.4" y="123.8" width="3.6" height="3.6" rx="0.8" fill="#3a5a8a"/><rect x="455.59999999999997" y="123.8" width="3.6" height="3.6" rx="0.8" fill="#3a5a8a"/><rect x="453.6" y="128.6" width="3.8" height="3.8" fill="#f0dc30" stroke="#5a6a8a" stroke-width="0.5"/><path d="M446.8 119v14" stroke="#e8d020" stroke-width="1.8" stroke-dasharray="2 1.8"/><path d="M448.6 118.6v14.6" stroke="#8aa8c4" stroke-width="0.8"/><path d="M485.00 117.00L487.88 122.64L494.13 123.63L489.66 128.11L490.64 134.37L485.00 131.50L479.36 134.37L480.34 128.11L475.87 123.63L482.12 122.64Z" fill="#f8d21c" stroke="#e09a10" stroke-width="1.6" stroke-linejoin="round"/><path d="M485 119.4l1.4 4.6l-3.6 0.6z" fill="#fdf0a0"/><path d="M517.60 117.00L520.48 122.64L526.73 123.63L522.26 128.11L523.24 134.37L517.60 131.50L511.96 134.37L512.94 128.11L508.47 123.63L514.72 122.64Z" fill="#28a8e4" stroke="#d8a838" stroke-width="1.6" stroke-linejoin="round"/><rect x="540.6" y="117.4" width="20" height="16.6" fill="#e6e6e6" stroke="#d0d0d0" stroke-width="1"/><path d="M551 117.4v16.6M540.6 126.4h20" stroke="#d0d0d0" stroke-width="1"/><rect x="541" y="117.8" width="9.6" height="8.4" fill="#e9e9e9" stroke="#333" stroke-width="1.7"/></svg>
<svg width="975" height="788" style="left:0;top:0"><path d="M208 644.5L242.5 492.5L378.5 440.5L274.3 313.5L412.7 214" fill="none" stroke="#4040dc" stroke-width="1.15"/><path d="M554.5 507.3L322.7 701.8" fill="none" stroke="#4040dc" stroke-width="1.15"/><path d="M412.7 214L651.8 298.2L554.5 507.3" fill="none" stroke="#4040dc" stroke-width="1.35"/><path d="M202.5 644.5h11M208 639.0v11" stroke="#4040dc" stroke-width="1.2"/><path d="M237.0 492.5h11M242.5 487.0v11" stroke="#4040dc" stroke-width="1.2"/><path d="M373.0 440.5h11M378.5 435.0v11" stroke="#4040dc" stroke-width="1.2"/><path d="M268.8 313.5h11M274.3 308.0v11" stroke="#4040dc" stroke-width="1.2"/><path d="M407.2 214h11M412.7 208.5v11" stroke="#4040dc" stroke-width="1.2"/><path d="M646.3 298.2h11M651.8 292.7v11" stroke="#4040dc" stroke-width="1.2"/><path d="M549.0 507.3h11M554.5 501.8v11" stroke="#4040dc" stroke-width="1.2"/><path d="M317.2 701.8h11M322.7 696.3v11" stroke="#4040dc" stroke-width="1.2"/><path d="M641.3 298.2L651.8 287.7L662.3 298.2L651.8 308.7Z" fill="none" stroke="#4040dc" stroke-width="0.95" stroke-opacity="0.85"/><path d="M647.8 298.2h5" stroke="#4040dc" stroke-width="2.2"/></svg>
<div style="position:absolute;left:538.5px;top:578px;width:270px;height:120.7px;background:#f0f0f0;box-shadow:0 3px 11px 1px rgba(0,0,0,0.24),0 0 0 1px rgba(90,90,90,0.12);"></div>
<div style="position:absolute;left:538.5px;top:578px;width:270px;height:38px;background:#fff;"></div>
<span class="t" style="left:574.30px;top:588.90px;font-size:15px;color:#909090;transform:scaleX(0.9882);-webkit-text-stroke:0;">String Inquire</span>
<div style="position:absolute;left:688.5px;top:596.3px;width:13px;height:1.2px;background:#7a7a7a;"></div>
<div style="position:absolute;left:747.5px;top:591.8px;width:11px;height:10.5px;border:1px solid #e6e6e6;box-sizing:border-box;"></div>
<div class="fld" style="left:545.4px;top:622.4px;width:270px;height:22px;background:#f2f2f2;border-color:#808080 #fbfbfb #fbfbfb #808080;box-shadow:none"></div>
<div class="btn g" style="left:579px;top:653px;width:47.5px;height:26px"></div>
<span class="t" style="left:589.40px;top:657.90px;font-size:15px;color:#000;transform:scaleX(0.9428);">Pick</span>
<div style="position:absolute;left:589.4px;top:672.6px;width:7.6px;height:1.2px;background:#111;"></div>
<div class="btn g" style="left:664px;top:653px;width:47.5px;height:26px"></div>
<span class="t" style="left:668.60px;top:657.90px;font-size:15px;color:#000;transform:scaleX(0.9338);">Finish</span>
<div class="btn g" style="left:749.5px;top:653px;width:47.5px;height:26px"></div>
<span class="t" style="left:757.50px;top:657.90px;font-size:15px;color:#000;transform:scaleX(0.9570);">Help</span>
<svg width="975" height="788" style="left:0;top:0"><path d="M551.6 590.6l8.2 -3.8l7.4 3l-7.6 4.2z" fill="#9cc0a8"/><path d="M551.6 590.6l8 3.4v12l-8 -4z" fill="#fff" stroke="#c8c8c8" stroke-width="0.5"/><path d="M559.6 594l7.6 -4.2v11.6l-7.6 4.6z" fill="#3a6a50"/><text x="552.2" y="601.6" font-family="Liberation Sans" font-size="7" font-weight="bold" fill="#d02030" textLength="6.6" lengthAdjust="spacingAndGlyphs">12</text><path d="M561.4 601.6l1.6 -4l1.2 3l1.4 -4.4" fill="none" stroke="#d8e8dc" stroke-width="1"/></svg>
<div style="position:absolute;left:795.4px;top:299px;width:159.8px;height:416.5px;background:#f0f0f0;box-shadow:0 3px 11px 1px rgba(0,0,0,0.24),0 0 0 1px rgba(90,90,90,0.12);overflow:hidden;"></div>
<div style="position:absolute;left:795.4px;top:299px;width:159.8px;height:38px;background:#fff;"></div>
<span class="t" style="left:805.30px;top:310.30px;font-size:15px;color:#9c9c9c;transform:scaleX(1.0310);-webkit-text-stroke:0;">Information</span>
<div style="position:absolute;left:929px;top:308px;width:25px;height:24.5px;background:#e5e5e5;"></div>
<svg width="975" height="788" style="left:0;top:0"><path d="M938 316.8l7 7M945 316.8l-7 7" stroke="#f3f3f3" stroke-width="1.1"/></svg>
<span class="t" style="left:798.40px;top:340.20px;font-size:15px;color:#111;transform:scaleX(0.9101);">General</span>
<span class="t" style="left:805.70px;top:361.70px;font-size:15px;color:#111;transform:scaleX(0.9919);">Model = CAD</span>
<span class="t" style="left:805.70px;top:382.90px;font-size:15px;color:#111;transform:scaleX(0.9574);">Name = LINE</span>
<span class="t" style="left:805.20px;top:404.30px;font-size:15px;color:#111;transform:scaleX(0.9596);">Type = Super</span>
<span class="t" style="left:805.20px;top:425.30px;font-size:15px;color:#111;transform:scaleX(0.9699);">Type like = 3d</span>
<span class="t" style="left:805.70px;top:446.90px;font-size:15px;color:#111;transform:scaleX(0.9992);">Colour = dark blue</span>
<span class="t" style="left:805.70px;top:468.10px;font-size:15px;color:#111;transform:scaleX(0.9538);">Line style = 1</span>
<span class="t" style="left:805.70px;top:489.10px;font-size:15px;color:#111;transform:scaleX(1.0314);">Pt/line = line</span>
<span class="t" style="left:805.00px;top:509.70px;font-size:15px;color:#111;transform:scaleX(0.9901);"># pts = 8</span>
<span class="t" style="left:805.00px;top:531.50px;font-size:15px;color:#111;transform:scaleX(1.0033);"># attributes = 3</span>
<span class="t" style="left:805.70px;top:552.90px;font-size:15px;color:#111;transform:scaleX(0.9478);">Length = 2426.325</span>
<span class="t" style="left:805.70px;top:574.20px;font-size:15px;color:#111;transform:scaleX(0.9488);">Locks = Read (-1)</span>
<span class="t" style="left:805.70px;top:595.50px;font-size:15px;color:#111;transform:scaleX(0.9732);">Point snap =</span>
<span class="t" style="left:805.70px;top:616.50px;font-size:15px;color:#111;transform:scaleX(0.9199);">X = 211261.596</span>
<span class="t" style="left:805.30px;top:637.90px;font-size:15px;color:#111;transform:scaleX(0.9165);">Y = 614165.238</span>
<span class="t" style="left:805.70px;top:659.30px;font-size:15px;color:#111;transform:scaleX(0.9497);">Prof ch = 909.745</span>
<span class="t" style="left:805.70px;top:680.50px;font-size:15px;color:#111;transform:scaleX(0.9574);">Bearing = 24°53'11.8"</span>
<div style="position:absolute;left:795px;top:700px;width:160px;height:15.5px;overflow:hidden">
<span class="t" style="left:10.70px;top:2.60px;font-size:15px;color:#111;transform:scaleX(0.9813)">+ve =</span></div>
<svg width="975" height="788" style="left:0;top:0"><path d="M582.6 428.6H762.4V486.8H729.5L797.7 517L671 486.8H582.6Z" fill="#fff" stroke="#4e4ea8" stroke-width="1.9" stroke-linejoin="miter"/><rect x="797.5" y="507.5" width="158.6" height="23" fill="none" stroke="#4e4ea8" stroke-width="3"/><path d="M552.6 716.6H589.2L607 680L660.6 716.6H770.6V775H552.6Z" fill="#fff" stroke="#4e4ea8" stroke-width="1.9" stroke-linejoin="miter"/></svg>
<span class="t" style="left:596.60px;top:432.52px;font-size:20.3px;color:#000;transform:scaleX(0.9572);">Number of Points</span>
<span class="t" style="left:616.30px;top:455.42px;font-size:20.3px;color:#000;transform:scaleX(0.9557);">on the String</span>
<span class="t" style="left:568.00px;top:720.32px;font-size:20.3px;color:#000;transform:scaleX(0.9629);">Open a String Inquire</span>
<span class="t" style="left:606.80px;top:743.12px;font-size:20.3px;color:#000;font-weight:bold;transform:scaleX(0.9536);">&lt;F2&gt;</span>
<span class="t" style="left:660.30px;top:743.12px;font-size:20.3px;color:#000;transform:scaleX(0.9204);">Button</span>
<svg width="975" height="788" style="left:0;top:0"><path d="M659.3 298.0L659.3 318.2L663.9 313.9L667.2 321.4L670.1 320.1L666.9 312.9L673.1 312.9Z" fill="#fff" stroke="#1a1a1a" stroke-width="0.9" stroke-linejoin="miter"/></svg>
</body></html>
